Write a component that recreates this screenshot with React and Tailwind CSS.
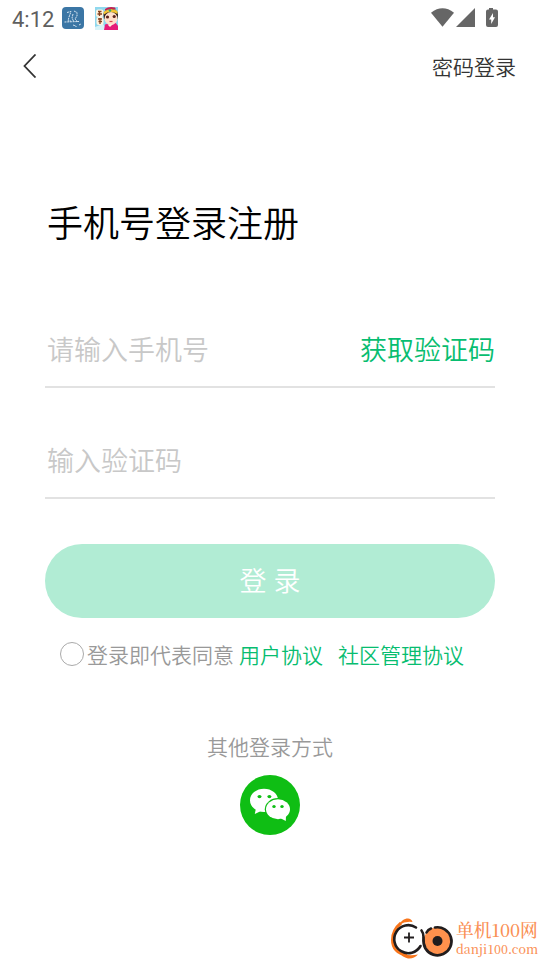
const StatusBar = () => {
  return (
    <div className="flex h-9 items-center pl-3 pr-[41px]">
      <span className="w-[50px] pt-1 font-[Roboto] text-[22px] leading-8 font-[450] text-[#5f5f5f]">
        4:12
      </span>
      <svg className="block h-[23px] w-[23px]" viewBox="0 0 23 23">
        <rect width="22" height="22" x="0" y="0" rx="4" fill="#3b76a5" />
        <g fill="none" stroke="#d5e4f0" strokeWidth="1" strokeDasharray="2 0.7">
          <path d="M5 5.5 L9 4.5 L7 10 L6 14 L9 14" />
          <path d="M12 4 L15 5.5 L15 9 L13 12 L16 15" />
          <path d="M11 7 L10 11 L12 15" />
          <path d="M2.5 15 L17 14.5" />
          <path d="M11 18 L14 19 L14 20 M17 18 L19 17" />
        </g>
      </svg>
      <svg className="ml-2.5 block h-[23px] w-[23px]" viewBox="0 0 23 23">
        <rect width="23" height="23" fill="#8fd8ee" />
        <path d="M0 20 L8 17 L12 23 H0 Z" fill="#d8f3f8" />
        <rect x="1" y="2.5" width="7.5" height="7.5" rx="2" fill="#fff3df" />
        <rect x="1.5" y="10" width="7" height="8" rx="2" fill="#fff3df" />
        <path
          d="M3 4.5 H6.5 M2.5 7 H7 M4.5 4 V9 M3 12 H7 M3.5 14.5 H7 M5 11 V17"
          stroke="#85421f"
          strokeWidth="1.3"
        />
        <path d="M9 23 L10 17.5 L20 15 L23 19 V23 Z" fill="#e51c79" />
        <path d="M8.5 8 C8 1 23 -1 23 8 L22.5 12 H9 Z" fill="#33221d" />
        <ellipse cx="16" cy="11.5" rx="6.5" ry="6.5" fill="#ffe0cb" />
        <path d="M8.5 5 Q15 -0.5 22.5 4 L22.5 7 Q15 3 9 7.5 Z" fill="#f4c534" />
        <path d="M10 2 Q14 -1 20 0.5 L21 2.5 Q14 1 10 3.8 Z" fill="#c52252" />
        <circle cx="15" cy="3.5" r="1.3" fill="#36a574" />
        <circle cx="12.5" cy="10" r="1.6" fill="#5d231a" />
        <circle cx="19.2" cy="9.5" r="1.6" fill="#5d231a" />
        <path d="M14.5 14.5 H17.5" stroke="#d6444c" strokeWidth="1.2" />
        <path d="M12.5 17.5 L15 20 L18 17" fill="#fff3df" />
      </svg>
      <svg className="ml-auto block h-5 w-[68px]" viewBox="0 0 68 20" fill="#666666">
        <path d="M0 4.7 Q11.5 -4.2 23 4.7 L11.5 18.7 Z" />
        <path d="M44 0 V19 H25 Z" />
        <path
          fillRule="evenodd"
          d="M58 0 H62 V1.5 H65 Q67 1.5 67 3.5 V17 Q67 19 65 19 H57 Q55 19 55 17 V3.5 Q55 1.5 57 1.5 H58 Z M62 5 L58 11.5 H60.2 V16 L64 9.3 H62 Z"
        />
      </svg>
    </div>
  );
};

const Field = ({ placeholder, action }) => {
  return (
    <div className="flex h-[76px] items-center justify-between border-b-2 border-[#e2e2e2] pl-0.5 text-[27px] leading-10">
      <span className="text-[#c8c8c8]">{placeholder}</span>
      {action && <button className="text-[#07bd70]">{action}</button>}
    </div>
  );
};

const WechatIcon = () => {
  return (
    <svg className="mt-[13px] block h-[60px] w-[60px]" viewBox="0 0 60 60">
      <circle cx="30" cy="30" r="30" fill="#0fbe14" />
      <ellipse cx="24" cy="25.3" rx="14" ry="11.6" fill="#fff" />
      <path d="M16 33 L14.8 39 L22 35.5 Z" fill="#fff" />
      <ellipse cx="38" cy="34.3" rx="13.2" ry="11.2" fill="#0fbe14" />
      <ellipse cx="38" cy="34.3" rx="12" ry="10" fill="#fff" />
      <path d="M40 43 L45.8 46 L46 40 Z" fill="#fff" />
      <g fill="#0fbe14">
        <ellipse cx="19.5" cy="21.6" rx="2" ry="1.7" />
        <ellipse cx="29.4" cy="21.6" rx="2" ry="1.7" />
        <ellipse cx="34" cy="31.4" rx="1.7" ry="1.5" />
        <ellipse cx="42" cy="31.4" rx="1.7" ry="1.5" />
      </g>
    </svg>
  );
};

const Watermark = () => {
  return (
    <div className="mt-auto flex h-[43px] items-start self-end pr-0.5 text-[#fa9055]">
      <svg className="block h-[43px] w-[65px]" viewBox="0 0 65 43" fill="none">
        <path
          d="M10 6 C4 11 1.5 16 1.5 23 C1.5 31 7 36.5 16 38.5"
          stroke="#f8751b"
          strokeWidth="3"
        />
        <path d="M8 8 C10 4 13 1.5 17 1.5 C19 1.5 21 3 21.5 5 Q14 4 8 8 Z" fill="#f8751b" />
        <path d="M8 35 Q16 40 27 37.5 Q23 42 17 41.5 Q11 40 8 35 Z" fill="#f8751b" />
        <path
          d="M25 10.5 A14 14 0 1 0 29.5 29"
          stroke="#211d1e"
          strokeWidth="2.6"
          strokeLinecap="round"
        />
        <path d="M18 15.5 V25.5 M13 20.5 H23" stroke="#211d1e" strokeWidth="1.8" />
        <circle cx="46.5" cy="24" r="13.8" fill="#ff914d" />
        <path
          d="M44 10.5 A14 14 0 1 1 34.5 31.5 Q32 27 32.5 21"
          stroke="#211d1e"
          strokeWidth="2.7"
          strokeLinecap="round"
        />
        <path
          d="M30.5 13.5 Q32.5 16 32.5 20 M35.5 15.5 Q37 12.5 40 11.5"
          stroke="#211d1e"
          strokeWidth="2.6"
          strokeLinecap="round"
        />
        <circle cx="46.5" cy="24" r="5" fill="#211d1e" />
      </svg>
      <div className="flex w-[82px] flex-col font-['Noto_Serif_CJK_SC','Liberation_Serif',serif] font-medium">
        <span className="text-[17.8px] leading-[26px] whitespace-nowrap">单机100网</span>
        <span className="text-[12.4px] leading-3 whitespace-nowrap">danji100.com</span>
      </div>
    </div>
  );
};

const App = () => {
  return (
    <div className="flex h-[960px] w-[540px] flex-col overflow-hidden bg-white font-['Noto_Sans_CJK_SC',sans-serif] font-[350]">
      <StatusBar />
      <header className="flex h-[60px] items-center justify-between pl-[23px] pr-6">
        <svg className="block h-6 w-3.5" viewBox="0 0 14 24" fill="none">
          <path d="M12.5 0.5 L1.5 12 L12.5 23.5" stroke="#333333" strokeWidth="1.8" />
        </svg>
        <button className="text-[21px] leading-8 text-[#333333]">密码登录</button>
      </header>
      <main className="flex flex-col px-[45px]">
        <h1 className="mt-[98px] pl-0.5 text-[36px] leading-[54px] font-[350] text-black">
          手机号登录注册
        </h1>
        <div className="mt-16 flex flex-col gap-[35px]">
          <Field placeholder="请输入手机号" action="获取验证码" />
          <Field placeholder="输入验证码" />
        </div>
        <button className="mt-[45px] h-[74px] rounded-full bg-[#b1ecd4] pb-0.5 text-[27px] leading-10 [word-spacing:1px] text-white">
          登 录
        </button>
        <div className="mt-5 flex h-8 items-center pl-[15px] text-[21px] leading-8 text-[#999999]">
          <span className="h-6 w-6 rounded-full border border-[#aaaaaa]" />
          <span className="ml-[3px]">登录即代表同意</span>
          <span className="ml-[5px] text-[#07bd70]">用户协议</span>
          <span className="ml-[15px] text-[#07bd70]">社区管理协议</span>
        </div>
      </main>
      <section className="mt-[60px] flex flex-col items-center">
        <p className="text-[21px] leading-8 text-[#999999]">其他登录方式</p>
        <WechatIcon />
      </section>
      <Watermark />
    </div>
  );
};

export default App;
